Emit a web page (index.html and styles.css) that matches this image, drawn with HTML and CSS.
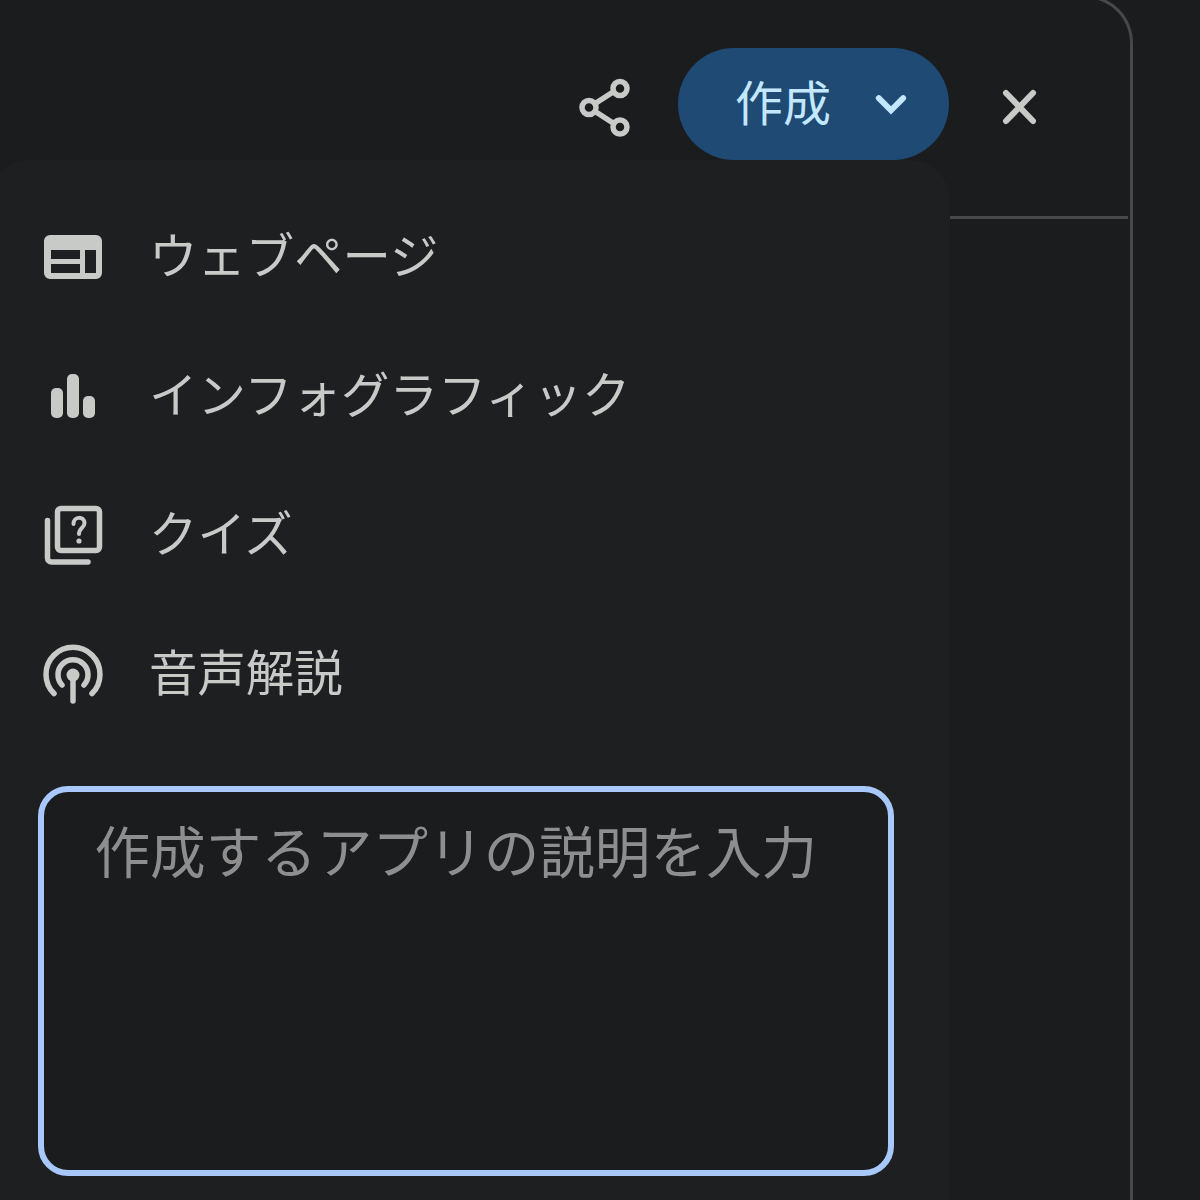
FILE: index.html
```html
<!DOCTYPE html>
<html lang="ja">
<head>
    <meta charset="UTF-8">
    <meta name="viewport" content="width=device-width, initial-scale=1.0">
    <title>作成</title>
    <link rel="stylesheet" href="styles.css">
</head>
<body>
    <div class="panel">
        <div class="panelheader">
            <svg class="shareicon" viewBox="575 48 60 112" width="60" height="112">
                <path class="line" d="M596 103l17-11M596 112l17 11"/>
                <circle class="line" cx="620" cy="88.500" r="7"/>
                <circle class="line" cx="589" cy="107.500" r="7"/>
                <circle class="line" cx="620" cy="127" r="7"/>
            </svg>
            <button class="createbutton">
                <span>作成</span>
                <svg viewBox="0 0 40 40" width="40" height="40">
                    <path class="chevron" d="M8 14L20.500 26.500L33 14"/>
                </svg>
            </button>
            <svg class="closeicon" viewBox="999 48 40 112" width="40" height="112">
                <path class="line closeline" d="M1006 93l27 28M1033 93l-27 28"/>
            </svg>
        </div>
    </div>

    <div class="menu">
        <div class="menuitem">
            <svg viewBox="38 187 70 139" width="70" height="139" class="menuicon">
                <path class="fill" fill-rule="evenodd" d="M50 235h46a6 6 0 0 1 6 6v32a6 6 0 0 1-6 6H50a6 6 0 0 1-6-6v-32a6 6 0 0 1 6-6zM51 250v9h29v-9zM51 264v9h29v-9zM85 250v23h11v-23z"/>
            </svg>
            <span>ウェブページ</span>
        </div>
        <div class="menuitem">
            <svg viewBox="38 326 70 139" width="70" height="139" class="menuicon">
                <rect class="fill" x="51" y="388" width="12" height="30" rx="5"/>
                <rect class="fill" x="67" y="374" width="12" height="44" rx="5"/>
                <rect class="fill" x="83" y="396" width="12" height="22" rx="5"/>
            </svg>
            <span>インフォグラフィック</span>
        </div>
        <div class="menuitem">
            <svg viewBox="38 465 70 139" width="70" height="139" class="menuicon">
                <rect class="line" x="57.500" y="508.500" width="42" height="42" rx="3.500"/>
                <path class="line" d="M47.500 520.500V558a4 4 0 0 0 4 4H88"/>
                <path class="thin" d="M73.500 524c0-8 11-8 11-1 0 5-5.500 5-5.500 11"/>
                <circle class="fill" cx="79" cy="541" r="2.600"/>
            </svg>
            <span>クイズ</span>
        </div>
        <div class="menuitem">
            <svg viewBox="38 604 70 139" width="70" height="139" class="menuicon">
                <path class="line" d="M54 693.500a27 27 0 1 1 38 0M62 685a15 15 0 1 1 22 0M73 676v25"/>
                <circle class="fill" cx="73" cy="675" r="6.500"/>
            </svg>
            <span>音声解説</span>
        </div>
        <div class="promptbox">作成するアプリの説明を入力</div>
    </div>
</body>
</html>
```

FILE: styles.css
```css
body{
    margin: 0;
    height: 1200px;
    overflow: hidden;
    position: relative;
    background-color: #1b1c1e;
    font-family: "Noto Sans CJK JP", sans-serif;
}

.panel{
    box-sizing: border-box;
    width: 1143px;
    height: 1205px;
    margin: -5px 0 0 -10px;
    border-style: solid;
    border-color: #47484a;
    border-width: 3px 3px 0 0;
    border-radius: 0 48px 0 0;
}

.panelheader{
    box-sizing: border-box;
    height: 221px;
    margin-right: 2px;
    padding: 50px 89px 0 0;
    border-bottom: 3px solid #47484a;
    display: flex;
    justify-content: flex-end;
    align-items: flex-start;
}

.line,.chevron,.thin{
    fill: none;
    stroke: #c8cac8;
    stroke-width: 5.500;
    stroke-linecap: round;
}

.thin{
    stroke-width: 4;
}

.chevron{
    stroke: #c2e7ff;
    stroke-width: 6;
}

.closeline{
    stroke-width: 6;
}

.fill{
    fill: #c8cac8;
}

.shareicon{
    margin-right: 43px;
}

.closeicon{
    margin-left: 50px;
}

.createbutton{
    box-sizing: border-box;
    width: 271px;
    height: 112px;
    padding: 0 39px 0 57px;
    border: none;
    border-radius: 56px;
    background-color: #1f4a73;
    color: #c2e7ff;
    font-family: inherit;
    font-size: 48px;
    white-space: nowrap;
    display: flex;
    align-items: center;
    gap: 40px;
}

.createbutton span{
    margin-top: -8px;
}

.menu{
    position: absolute;
    top: 160px;
    left: -10px;
    box-sizing: border-box;
    width: 960px;
    height: 1040px;
    padding: 27px 0 0 48px;
    border-radius: 40px 40px 0 0;
    background-color: #1e1f21;
}

.menuitem{
    height: 139px;
    display: flex;
    align-items: center;
    gap: 41px;
    color: #c8cac8;
    font-size: 48.400px;
}

.menuitem span{
    margin-top: -8px;
}

.menuicon{
    flex-shrink: 0;
}

.promptbox{
    box-sizing: border-box;
    width: 856px;
    height: 390px;
    margin-top: 43px;
    padding: 21.500px 0 0 50.500px;
    border: 6.500px solid #a8c7fa;
    border-radius: 30px;
    background-color: #1b1c1e;
    color: #8e8e8e;
    font-size: 55.600px;
    line-height: 70px;
}
```
